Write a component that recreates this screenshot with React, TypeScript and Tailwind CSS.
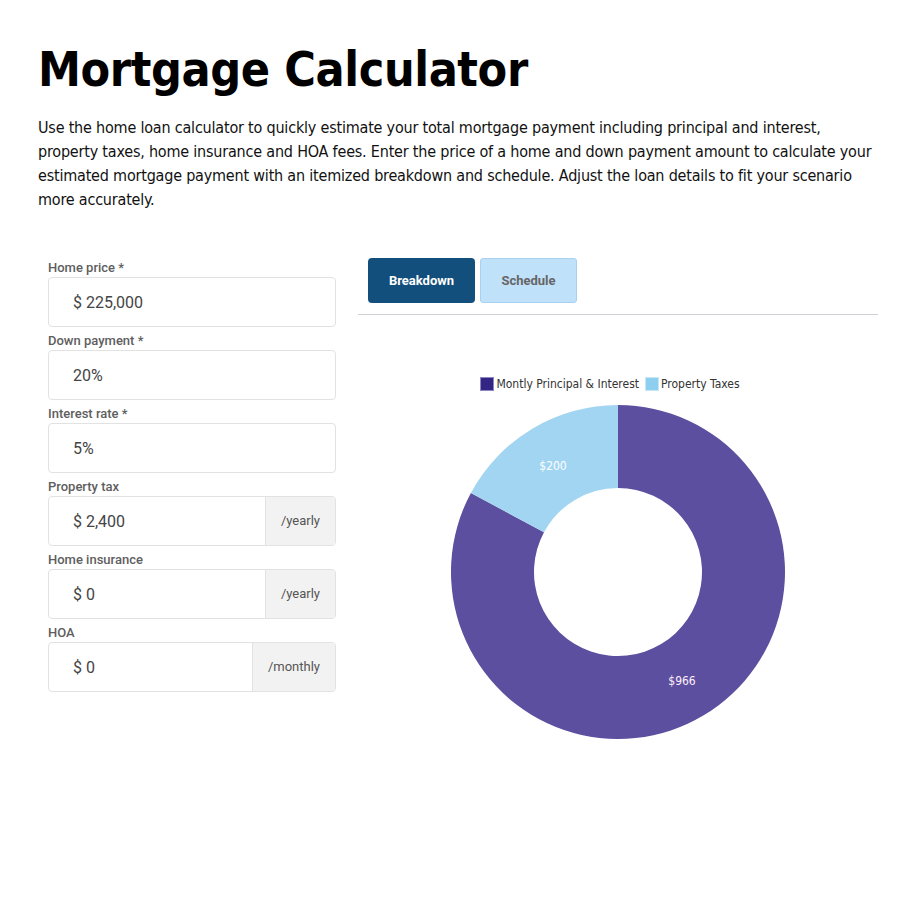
import React from "react";

const fields = [
  { label: "Home price *", value: "$ 225,000" },
  { label: "Down payment *", value: "20%" },
  { label: "Interest rate *", value: "5%" },
  { label: "Property tax", value: "$ 2,400", suffix: "/yearly" },
  { label: "Home insurance", value: "$ 0", suffix: "/yearly" },
  { label: "HOA", value: "$ 0", suffix: "/monthly" },
];

function arc(cx: number, cy: number, ro: number, ri: number, a0: number, a1: number) {
  const p = (r: number, a: number) => {
    const t = (a * Math.PI) / 180;
    return [cx + r * Math.sin(t), cy - r * Math.cos(t)];
  };
  const large = a1 - a0 > 180 ? 1 : 0;
  const [x0, y0] = p(ro, a0);
  const [x1, y1] = p(ro, a1);
  const [x2, y2] = p(ri, a1);
  const [x3, y3] = p(ri, a0);
  return `M${x0} ${y0} A${ro} ${ro} 0 ${large} 1 ${x1} ${y1} L${x2} ${y2} A${ri} ${ri} 0 ${large} 0 ${x3} ${y3} Z`;
}

function Donut() {
  const total = 966 + 200;
  const taxAng = (200 / total) * 360;
  const cx = 260;
  const cy = 171;
  return (
    <svg width="520" height="360" viewBox="0 0 520 360">
      <path d={arc(cx, cy, 167, 84, 0, 360 - taxAng)} fill="#5c4f9f" />
      <path d={arc(cx, cy, 167, 84, 360 - taxAng, 359.999)} fill="#a1d5f1" />
      <text x="195" y="69" fill="#ffffff" fontSize="12" textAnchor="middle" style={{ fontFamily: '"DejaVu Sans Condensed", "DejaVu Sans", sans-serif' }}>$200</text>
      <text x="324" y="284" fill="#fff0fa" fontSize="12" textAnchor="middle" style={{ fontFamily: '"DejaVu Sans Condensed", "DejaVu Sans", sans-serif' }}>$966</text>
    </svg>
  );
}

export default function App() {
  return (
    <div className="bg-white w-[900px] min-h-[900px] pl-[38px] pr-[22px] pt-[38px] text-black">
      <h1 className="font-['DejaVu_Sans_Condensed','DejaVu_Sans',sans-serif] font-bold text-[48px] leading-[62px] tracking-[-0.4px]">
        Mortgage Calculator
      </h1>
      <p className="mt-[16px] font-['DejaVu_Sans_Condensed','DejaVu_Sans',sans-serif] text-[16px] leading-[24px] tracking-[-0.2px] text-[#111]">
        Use the home loan calculator to quickly estimate your total mortgage payment including principal and interest, property taxes, home insurance and HOA fees. Enter the price of a home and down payment amount to calculate your estimated mortgage payment with an itemized breakdown and schedule. Adjust the loan details to fit your scenario more accurately.
      </p>
      <div className="mt-[46px] flex">
        <div className="ml-[10px] mt-[1px] w-[288px] flex flex-col font-['Roboto',sans-serif]">
          {fields.map((f) => (
            <div key={f.label} className="flex flex-col mb-[5px]">
              <label className="text-[13px] leading-[18px] font-medium text-[#5e5e5e]">{f.label}</label>
              <div className="flex h-[50px] border border-[#e2e2e2] rounded-[4px] bg-white overflow-hidden">
                <div className="flex-1 flex items-center pl-[24px] pt-[2px] text-[16px] text-[#444]">{f.value}</div>
                {f.suffix && (
                  <div className="flex items-center justify-center px-[15px] bg-[#f2f2f2] border-l border-[#e2e2e2] text-[13px] text-[#555]">
                    {f.suffix}
                  </div>
                )}
              </div>
            </div>
          ))}
        </div>
        <div className="ml-[22px] w-[520px] flex flex-col">
          <div className="flex gap-[5px] pl-[10px] pb-[11px] border-b border-[#cfcfd6] font-['Roboto',sans-serif]">
            <button className="w-[107px] h-[45px] rounded-[4px] bg-[#134f7c] text-white text-[13px] font-bold">Breakdown</button>
            <button className="w-[97px] h-[45px] rounded-[3px] bg-[#c0e1fa] border border-[#a8d1f0] text-[#666] text-[13px] font-bold">Schedule</button>
          </div>
          <div className="mt-[60px] flex justify-center items-center gap-[6px] font-['DejaVu_Sans_Condensed','DejaVu_Sans',sans-serif] text-[12px] text-[#333] pr-[16px]">
            <span className="flex items-center gap-[2px]">
              <span className="w-[14px] h-[14px] bg-[#312683] border border-[#8c87c2]" />
              Montly Principal &amp; Interest
            </span>
            <span className="flex items-center gap-[2px]">
              <span className="w-[14px] h-[14px] bg-[#8ecff0] border border-[#c6e7f8]" />
              Property Taxes
            </span>
          </div>
          <div className="mt-[8px]">
            <Donut />
          </div>
        </div>
      </div>
    </div>
  );
}
